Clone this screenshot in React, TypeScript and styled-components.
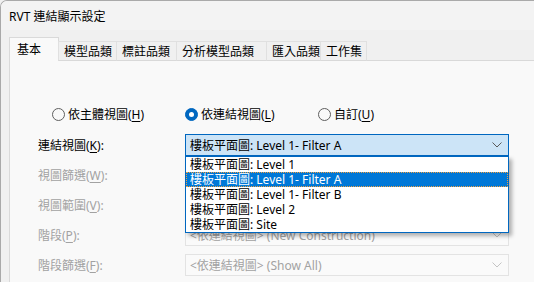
import React from 'react'
import styled, { createGlobalStyle } from 'styled-components'

const GlobalStyle = createGlobalStyle`
  html, body {
    margin: 0;
    padding: 0;
    width: 534px;
    height: 282px;
    overflow: hidden;
    background: #f0f0f0;
  }
  body {
    font-family: "Noto Sans", "Noto Sans CJK TC", sans-serif;
    font-size: 12px;
    color: #000;
  }
`

const Window = styled.div`
    width: 534px;
    height: 282px;
    box-sizing: border-box;
    border-left: 1px solid #a9a9a9;
    border-top: 1px solid #a9a9a9;
    border-top-left-radius: 7px;
    overflow: hidden;
    display: flex;
    flex-direction: column;
    background: #f0f0f0;
`

const TitleBar = styled.div`
    height: 29px;
    flex: none;
    background: #f3f3f3;
    display: flex;
    align-items: center;
    padding-left: 8px;
    font-size: 12px;
`

const Body = styled.div`
    flex: 1;
    display: flex;
    flex-direction: column;
    padding: 8px 0 0 8px;
`

const TabStrip = styled.div`
    display: flex;
    align-items: flex-end;
    height: 23px;
    position: relative;
    z-index: 1;
    margin-bottom: -1px;
`

const Tab = styled.div<{ active?: boolean; w: number }>`
    width: ${({ w }) => w}px;
    height: ${({ active }) => active ? '24px' : '20px'};
    box-sizing: border-box;
    display: flex;
    align-items: center;
    padding-left: ${({ active }) => active ? '7px' : '5px'};
    padding-bottom: ${({ active }) => active ? '2px' : '0'};
    background: ${({ active }) => active ? '#f9f9f9' : '#f0f0f0'};
    border: 1px solid ${({ active }) => active ? '#d9d9d9' : '#e0e0e0'};
    border-bottom: ${({ active }) => active ? 'none' : '1px solid #d9d9d9'};
    margin-right: -1px;
`

const Panel = styled.div`
    flex: 1;
    background: #f9f9f9;
    border-top: 1px solid #d9d9d9;
    border-left: 1px solid #d9d9d9;
    padding: 43px 0 0 28px;
`

const RadioRow = styled.div`
    display: grid;
    grid-template-columns: 133px 133px auto;
    height: 20px;
    align-items: center;
    padding-left: 14px;
`

const RadioItem = styled.label`
    display: flex;
    align-items: center;
    gap: 3px;
`

const RadioDot = styled.span<{ checked?: boolean }>`
    width: 13px;
    height: 13px;
    box-sizing: border-box;
    border-radius: 50%;
    border: 1px solid ${({ checked }) => checked ? '#0067c0' : '#5f5f5f'};
    background: ${({ checked }) => checked ? '#0067c0' : '#f9f9f9'};
    display: flex;
    align-items: center;
    justify-content: center;
    &:after {
        content: '';
        width: 5px;
        height: 5px;
        border-radius: 50%;
        background: ${({ checked }) => checked ? '#fff' : 'transparent'};
    }
`

const Form = styled.div`
    display: grid;
    grid-template-columns: 147px 324px;
    grid-auto-rows: 22px;
    row-gap: 8px;
    margin-top: 10px;
    align-items: center;
`

const Label = styled.div<{ disabled?: boolean }>`
    color: ${({ disabled }) => disabled ? '#a2a2a2' : '#000'};
`

const Key = styled.u`
    text-underline-offset: 2px;
`

const ComboWrap = styled.div`
    position: relative;
    height: 22px;
`

const Combo = styled.div<{ open?: boolean; disabled?: boolean }>`
    height: 22px;
    box-sizing: border-box;
    display: flex;
    align-items: center;
    justify-content: space-between;
    padding: 0 6px 0 4px;
    border: 1px solid ${({ open }) => open ? '#0067c0' : '#e3e3e3'};
    background: ${({ open }) => open ? '#cce4f7' : '#fafafa'};
    color: ${({ disabled }) => disabled ? '#a2a2a2' : '#000'};
    white-space: nowrap;
`

const ListBox = styled.div`
    position: absolute;
    top: 22px;
    left: 0;
    width: 324px;
    box-sizing: border-box;
    border: 1px solid #0067c0;
    background: #fff;
    box-shadow: 3px 3px 4px rgba(0, 0, 0, 0.3);
    z-index: 10;
`

const ListItem = styled.div<{ selected?: boolean }>`
    height: 15px;
    line-height: 15px;
    padding-left: 4px;
    white-space: nowrap;
    background: ${({ selected }) => selected ? '#0078d7' : '#fff'};
    color: ${({ selected }) => selected ? '#fff' : '#000'};
    outline: ${({ selected }) => selected ? '1px dotted #f0a040' : 'none'};
    outline-offset: -1px;
`

const Chevron = ({ color }: { color: string }) => (
    <svg width="10" height="6" viewBox="0 0 10 6">
        <polyline points="0.5,0.5 5,5 9.5,0.5" fill="none" stroke={color} strokeWidth="1" />
    </svg>
)

const tabs = [
    { name: '基本', w: 50 },
    { name: '模型品類', w: 59 },
    { name: '標註品類', w: 61 },
    { name: '分析模型品類', w: 91 },
    { name: '匯入品類', w: 55 },
    { name: '工作集', w: 47 },
]

const views = [
    '樓板平面圖: Level 1',
    '樓板平面圖: Level 1- Filter A',
    '樓板平面圖: Level 1- Filter B',
    '樓板平面圖: Level 2',
    '樓板平面圖: Site',
]

const App = () => {
    return (
        <>
            <GlobalStyle />
            <Window>
                <TitleBar>RVT 連結顯示設定</TitleBar>
                <Body>
                    <TabStrip>
                        {tabs.map((t, i) => (
                            <Tab key={t.name} w={t.w} active={i === 0}>{t.name}</Tab>
                        ))}
                    </TabStrip>
                    <Panel>
                        <RadioRow>
                            <RadioItem><RadioDot /><span>依主體視圖(<Key>H</Key>)</span></RadioItem>
                            <RadioItem><RadioDot checked /><span>依連結視圖(<Key>L</Key>)</span></RadioItem>
                            <RadioItem><RadioDot /><span>自訂(<Key>U</Key>)</span></RadioItem>
                        </RadioRow>
                        <Form>
                            <Label>連結視圖(<Key>K</Key>):</Label>
                            <ComboWrap>
                                <Combo open>
                                    <span>{views[1]}</span>
                                    <Chevron color="#5a5a5a" />
                                </Combo>
                                <ListBox>
                                    {views.map((v, i) => (
                                        <ListItem key={v} selected={i === 1}>{v}</ListItem>
                                    ))}
                                </ListBox>
                            </ComboWrap>

                            <Label disabled>視圖篩選(<Key>W</Key>):</Label>
                            <Combo disabled><span>&lt;依連結視圖&gt; (無)</span><Chevron color="#c4c4c4" /></Combo>

                            <Label disabled>視圖範圍(<Key>V</Key>):</Label>
                            <Combo disabled><span>&lt;依連結視圖&gt;</span><Chevron color="#c4c4c4" /></Combo>

                            <Label disabled>階段(<Key>P</Key>):</Label>
                            <Combo disabled><span>&lt;依連結視圖&gt; (New Construction)</span><Chevron color="#c4c4c4" /></Combo>

                            <Label disabled>階段篩選(<Key>F</Key>):</Label>
                            <Combo disabled><span>&lt;依連結視圖&gt; (Show All)</span><Chevron color="#c4c4c4" /></Combo>
                        </Form>
                    </Panel>
                </Body>
            </Window>
        </>
    )
}

export default App
